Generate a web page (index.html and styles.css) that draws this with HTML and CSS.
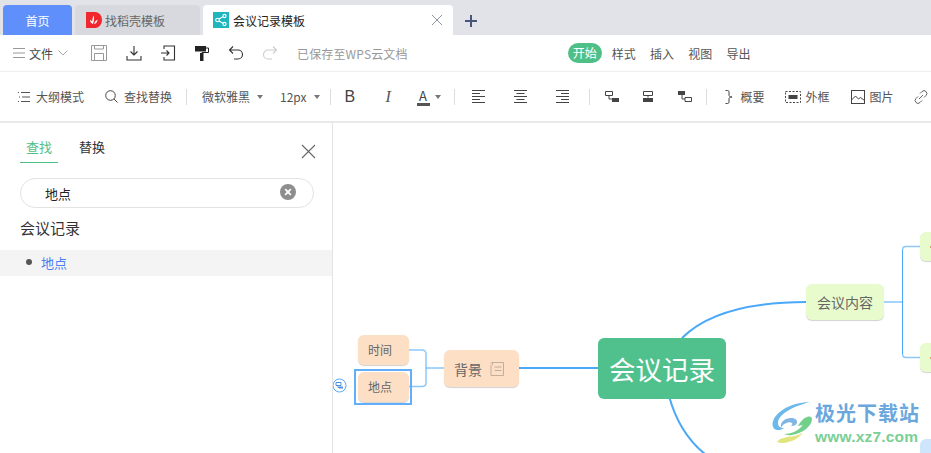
FILE: index.html
```html
<!DOCTYPE html>
<html lang="zh">
<head>
<meta charset="utf-8">
<title>会议记录模板</title>
<link rel="stylesheet" href="styles.css">
</head>
<body>
<div class="app">
  <div class="tabbar">
    <div class="tab tab-home">首页</div>
    <div class="tab tab-gray">
      <svg class="tab-icon" viewBox="0 0 16 16"><path d="M0 0h9a7 8 0 0 1 0 16H0z" fill="#f0282d"/><path d="M7.500 3.500c1 2 .6 5-.5 8.500-2-.5-3.200-2.500-2.800-4.500.8 1 1.500 1.500 2 1.700.3-2 .5-4 1.300-5.700zM8.200 12c.2-1.800 1.300-3.300 3.300-4.200-.1 2.200-1.300 3.800-3.300 4.200z" fill="#fff"/></svg>
      <span>找稻壳模板</span>
    </div>
    <div class="tab tab-active">
      <svg class="tab-icon" viewBox="0 0 16 16"><rect width="16" height="16" fill="#1fb5bd"/><g fill="none" stroke="#fff" stroke-width="1.100"><circle cx="4.500" cy="8" r="1.800"/><circle cx="11.500" cy="4" r="1.600"/><circle cx="11.500" cy="12" r="1.600"/><path d="M6 7l4-2.200M6 9l4 2.200"/></g></svg>
      <span class="tab-label">会议记录模板</span>
      <svg class="tab-close" viewBox="0 0 12 12"><path d="M1 1l10 10M11 1L1 11" stroke="#8d93a0" stroke-width="1" fill="none"/></svg>
    </div>
    <svg class="tab-add" viewBox="0 0 14 14"><path d="M7 1v12M1 7h12" stroke="#47567a" stroke-width="2" fill="none"/></svg>
  </div>

  <div class="menubar">
    <svg class="ico12" viewBox="0 0 12 12"><path d="M0 1.500h12M0 6h12M0 10.500h12" stroke="#999" stroke-width="1" fill="none"/></svg>
    <span class="menu-file">文件</span>
    <svg class="chev" viewBox="0 0 10 6"><path d="M.5.500L5 5 9.500.500" stroke="#aaa" fill="none"/></svg>
    <svg class="ico16 m-first" viewBox="0 0 16 16"><path d="M.5.500h15v15H.5zM3.500 15.500v-7h9v7M3.500.500v3.500h9V.500" stroke="#999" fill="none"/></svg>
    <svg class="ico16 m-dl" viewBox="0 0 16 16"><path d="M8 1v9M4.500 6.500L8 10l3.500-3.500M1 11v4h14v-4" stroke="#333" stroke-width="1.100" fill="none"/></svg>
    <svg class="ico16" viewBox="0 0 16 16"><path d="M4 4V1h10.500v14H4v-3M1 8h8M6.500 5.500L9 8l-2.500 2.500" stroke="#333" stroke-width="1.100" fill="none"/></svg>
    <svg class="ico16" viewBox="0 0 16 16"><rect x="1" y="1" width="11" height="5.500" fill="#222"/><path d="M12 3h2.500v4.500H8V9" stroke="#222" fill="none"/><rect x="6" y="8" width="3.500" height="8" fill="#222"/></svg>
    <svg class="ico16" viewBox="0 0 16 16"><path d="M5 1.500L1.500 5 5 8.500M1.500 5H10a4.500 4.500 0 0 1 0 9H6" stroke="#333" stroke-width="1.100" fill="none"/></svg>
    <svg class="ico16" viewBox="0 0 16 16"><path d="M11 1.500L14.500 5 11 8.500M14.500 5H6a4.500 4.500 0 0 0 0 9h4" stroke="#ccc" stroke-width="1.100" fill="none"/></svg>
    <span class="saved">已保存至WPS云文档</span>
    <div class="menu-tabs">
      <span class="pill">开始</span>
      <span>样式</span>
      <span>插入</span>
      <span>视图</span>
      <span>导出</span>
    </div>
  </div>

  <div class="toolbar">
    <svg class="ico12 t-first" viewBox="0 0 12 12"><path d="M0 1.500h1M3 1.500h9M1 6h1M4 6h8M0 10.500h1M3 10.500h9" stroke="#555" fill="none"/></svg>
    <span class="t-label t-outline">大纲模式</span>
    <svg class="ico13 t-search" viewBox="0 0 13 13"><circle cx="5.500" cy="5.500" r="4.800" stroke="#444" fill="none"/><path d="M9 9l3.500 3.500" stroke="#444" fill="none"/></svg>
    <span class="t-label">查找替换</span>
    <i class="sep s1"></i>
    <span class="t-label t-font">微软雅黑</span><i class="caret"></i>
    <span class="t-label t-size">12px</span><i class="caret"></i>
    <i class="sep s2"></i>
    <span class="t-b">B</span>
    <span class="t-i">I</span>
    <span class="t-a">A</span><i class="caret c-a"></i>
    <i class="sep s3"></i>
    <svg class="ico13 t-al1" viewBox="0 0 13 13"><path d="M0 .500h13M0 3.500h8M0 6.500h13M0 9.500h8M0 12.500h13" stroke="#444" fill="none"/></svg>
    <svg class="ico13 t-al" viewBox="0 0 13 13"><path d="M0 .500h13M2.500 3.500h8M0 6.500h13M2.500 9.500h8M0 12.500h13" stroke="#444" fill="none"/></svg>
    <svg class="ico13 t-al" viewBox="0 0 13 13"><path d="M0 .500h13M5 3.500h8M0 6.500h13M5 9.500h8M0 12.500h13" stroke="#444" fill="none"/></svg>
    <i class="sep s4"></i>
    <svg class="ico14 t-n1" viewBox="0 0 14 14"><path d="M.5 1.500h7v4h-7zM4 5.500v3.500h3" stroke="#444" fill="none"/><rect x="7" y="8" width="7" height="4" fill="#444"/></svg>
    <svg class="ico14 t-n" viewBox="0 0 14 14"><path d="M2.500 1.500h9v4h-9zM7 5.500v2" stroke="#444" fill="none"/><rect x="2" y="8" width="10" height="4" fill="#444"/></svg>
    <svg class="ico14 t-n3" viewBox="0 0 14 14"><rect x="0" y="1" width="7" height="4" fill="#444"/><path d="M4 5v4h3M7 7.500h6.500v4H7z" stroke="#444" fill="none"/></svg>
    <i class="sep s5"></i>
    <svg class="brace" viewBox="0 0 8 14"><path d="M.5.500h2c1 0 1.500.5 1.500 1.500v3c0 1 .5 2 3 2-2.500 0-3 1-3 2v3c0 1-.5 1.500-1.500 1.500h-2" stroke="#444" fill="none"/></svg>
    <span class="t-label t-sum">概要</span>
    <svg class="frame" viewBox="0 0 16 12"><rect x=".5" y=".5" width="15" height="11" stroke="#444" stroke-dasharray="2 1.500" fill="none"/><rect x="3.500" y="4" width="9" height="4" fill="#444"/></svg>
    <span class="t-label t-frame">外框</span>
    <svg class="ico14 t-img" viewBox="0 0 14 14"><rect x=".5" y=".5" width="13" height="13" stroke="#444" fill="none"/><path d="M.5 10L4.500 6l3 3 2-1.500 4 3" stroke="#444" fill="none"/></svg>
    <span class="t-label t-pic">图片</span>
    <svg class="ico14 t-link" viewBox="0 0 14 14"><path d="M6 3.500l2-2a2.800 2.800 0 0 1 4 4l-2 2M8 10.500l-2 2a2.800 2.800 0 0 1-4-4l2-2M5 9l4-4" stroke="#666" fill="none"/></svg>
  </div>

  <div class="main">
    <aside class="side">
      <div class="side-tabs">
        <span class="side-tab on">查找</span>
        <span class="side-tab">替换</span>
        <svg class="side-close" viewBox="0 0 15 15"><path d="M1 1l13 13M14 1L1 14" stroke="#666" stroke-width="1.100" fill="none"/></svg>
      </div>
      <div class="search">
        <span>地点</span>
        <svg class="clear" viewBox="0 0 16 16"><circle cx="8" cy="8" r="8" fill="#8e8e8e"/><path d="M5.200 5.200l5.600 5.600M10.800 5.200l-5.600 5.600" stroke="#fff" stroke-width="1.800"/></svg>
      </div>
      <div class="doc-title">会议记录</div>
      <div class="hit"><i class="dot"></i><span>地点</span></div>
    </aside>

    <div class="canvas">
      <svg class="lines" viewBox="0 0 598 330">
        <g fill="none" stroke="#4aa8f8">
          <path d="M185 245H265" stroke-width="2"/>
          <path d="M75 227h14q4 0 4 4v28.500q0 4-4 4H75" stroke="#8ec8fb" stroke-width="1.500"/>
          <path d="M93 245h18" stroke-width="1"/>
          <path d="M349 215C372 192 412 179 474 179" stroke-width="2"/>
          <path d="M551 179h18.500" stroke-width="1"/>
          <path d="M569.500 127v104" stroke-width="1"/>
          <path d="M587 123.500h-14q-3.500 0-3.500 3.500M587 234.500h-14q-3.500 0-3.500-3.500" stroke="#8ec8fb" stroke-width="1.500"/>
          <path d="M336 273C342 295 352 315 372 331" stroke-width="2"/>
        </g>
      </svg>
      <div class="node peach n-time">时间</div>
      <div class="node peach n-place">地点</div>
      <div class="selected"></div>
      <svg class="add-ico" viewBox="0 0 15 15"><circle cx="7.500" cy="7.500" r="6.500" stroke="#5aa9fa" fill="#fff"/><path d="M4 4.500h5v3H4zM6 7.500v2h1.500" stroke="#4a8ee0" fill="none"/><rect x="7" y="8.500" width="4" height="2" fill="#4a8ee0"/></svg>
      <div class="node peach n-bg">背景<svg class="note" viewBox="0 0 14 14"><path d="M2 .5h11.500v13H1V3M.5 1h2v2M4.500 5h7M4.500 8.500h7" stroke="#c4ad9c" fill="none"/></svg></div>
      <div class="node root">会议记录</div>
      <div class="node green n-content">会议内容</div>
      <div class="node green n-sub1"></div>
      <div class="node green n-sub2"></div>
      <div class="node blue n-sub3"></div>
      <div class="watermark">
        <svg class="wm-logo" viewBox="0 0 52 46">
          <path d="M42 2C30 2 14 7 7 17 3 23 4 29 9 30c3 .5 6-1 7-2-3 0-6-1-6-5C10 14 26 6 42 2z" fill="#6bb8ea"/>
          <path d="M13 27c-1-5 4-9 10-9 4 0 6 2 6 4 0 3-3 4-6 4 1-1 2-2 1-3-2-2-7 0-9 2-1 1-1 2-2 2z" fill="#7fb6e4"/>
          <path d="M30 26c2-3 4-7 9-9 3-1 5 0 5 2 0 7-9 14-20 16-3 .5-6 0-8-1 7 0 14-3 18-8 1-1 0-1-4 0z" fill="#72d08a"/>
          <path d="M9 42c2-4 10-5 17-6 4-1 7-2 9-3-5 6-12 9-19 10-3 0-5 0-7-1z" fill="#e2e57e"/>
        </svg>
        <div class="wm-text">
          <div class="wm-cn">极光下载站</div>
          <div class="wm-en">www.xz7.com</div>
        </div>
      </div>
    </div>
  </div>
</div>
</body>
</html>
```
FILE: styles.css
```css
* { box-sizing: border-box; }
html, body { margin: 0; padding: 0; }
body {
  width: 931px;
  height: 453px;
  overflow: hidden;
  background: #fff;
  font-family: "Noto Sans CJK SC", "Liberation Sans", sans-serif;
  font-size: 12px;
  color: #444;
}
i { display: block; font-style: normal; flex: none; }
svg { display: block; flex: none; }
.app { width: 931px; height: 453px; display: flex; flex-direction: column; overflow: hidden; }

.tabbar { height: 35px; flex: none; display: flex; align-items: flex-end; padding-left: 3px; background: #e1e3e8; }
.tab { height: 30px; display: flex; align-items: center; border-radius: 4px 4px 0 0; font-size: 12px; }
.tab-home { width: 69px; justify-content: center; background: #5f8ffb; color: #fff; }
.tab-gray { width: 125px; margin-left: 3px; padding-left: 11px; background: #d8d9de; color: #666; }
.tab-active { width: 250px; margin-left: 3px; padding-left: 10px; background: #fff; color: #222; }
.tab-icon { width: 16px; height: 16px; }
.tab-gray span { margin-left: 3px; }
.tab-label { margin-left: 4px; flex: 1; }
.tab-close { width: 12px; height: 12px; margin-right: 10px; }
.tab-add { width: 14px; height: 14px; margin: 0 0 7px 11px; }

.menubar { height: 37px; flex: none; display: flex; align-items: center; padding-left: 13px; border-bottom: 1px solid #eee; }
.ico12 { width: 12px; height: 12px; }
.ico13 { width: 13px; height: 13px; }
.ico14 { width: 14px; height: 14px; }
.ico16 { width: 16px; height: 16px; margin-left: 18px; }
.menu-file { margin-left: 4px; color: #444; }
.chev { width: 10px; height: 6px; margin-left: 5px; }
.ico16.m-first { margin-left: 23px; }
.ico16.m-dl { margin-left: 19px; }
.saved { margin-left: 19px; color: #999; letter-spacing: .15px; }
.menu-tabs { display: flex; align-items: center; gap: 14.3px; margin-left: 160px; color: #555; }
.pill { width: 34px; height: 20px; line-height: 20px; text-align: center; border-radius: 10px; background: #4fbf88; color: #fff; margin-right: -4.3px; }

.toolbar { height: 51px; flex: none; display: flex; align-items: center; padding-left: 18px; border-bottom: 2px solid #e9e9e9; white-space: nowrap; overflow: hidden; }
.t-label { color: #555; }
.t-outline { margin-left: 6px; }
.t-search { margin-left: 21px; margin-right: 6px; }
.sep { width: 1px; height: 16px; background: #ddd; }
.s1 { margin: 0 15px 0 14px; }
.caret { width: 0; height: 0; margin-left: 7px; border: 3px solid transparent; border-top: 4px solid #777; border-bottom: 0; }
.t-size { margin-left: 17px; }
.s2 { margin-left: 10px; }
.t-b { margin-left: 14px; width: 11px; font: 16px "Liberation Sans", sans-serif; color: #444; }
.t-i { margin-left: 30px; width: 5px; font: italic 16px "Liberation Serif", serif; color: #555; }
.t-a { margin-left: 26px; width: 13px; font-size: 13px; line-height: 15px; height: 18px; color: #444; text-align: center; border-bottom: 3px solid #555; }
.c-a { margin-left: 5px; }
.s3 { margin-left: 13px; }
.t-al1 { margin-left: 17px; }
.t-al { margin-left: 29px; }
.s4 { margin-left: 20px; }
.t-n1 { margin-left: 15px; }
.t-n { margin-left: 22px; }
.t-n3 { margin-left: 23px; }
.s5 { margin-left: 14px; }
.brace { width: 8px; height: 14px; margin-left: 18px; }
.t-sum { margin-left: 8px; }
.frame { width: 16px; height: 12px; margin-left: 20px; }
.t-frame { margin-left: 5px; }
.t-img { margin-left: 21px; }
.t-pic { margin-left: 5px; }
.t-link { margin-left: 20px; }

.main { flex: 1; min-height: 0; display: flex; }
.side { width: 333px; flex: none; border-right: 1px solid #e4e4e4; }
.side-tabs { height: 41px; position: relative; display: flex; align-items: flex-start; padding: 14px 0 0 20px; }
.side-tab { width: 38px; height: 26px; margin-right: 15px; text-align: center; font-size: 13px; line-height: 20px; color: #333; }
.side-tab.on { color: #4fbf88; border-bottom: 1px solid #4fbf88; }
.side-close { width: 15px; height: 15px; position: absolute; left: 301px; top: 21px; }
.search { width: 294px; height: 30px; margin: 14px 0 0 20px; padding: 0 17px 0 24px; display: flex; align-items: center; justify-content: space-between; border: 1px solid #e3e3e3; border-radius: 15px; color: #222; font-size: 13px; }
.clear { width: 16px; height: 16px; margin-top: -2px; }
.doc-title { margin: 9px 0 0 20px; height: 23px; line-height: 22px; font-size: 15px; color: #333; }
.hit { height: 26px; margin-top: 10px; padding-left: 26px; padding-bottom: 2px; display: flex; align-items: center; background: #f4f4f4; color: #4a7ef6; font-size: 13px; }
.dot { width: 6px; height: 6px; border-radius: 50%; background: #555; margin-right: 9px; }

.canvas { flex: 1; position: relative; overflow: hidden; background: #fff; }
.lines { position: absolute; left: 0; top: 0; width: 598px; height: 330px; }
.node { position: absolute; display: flex; align-items: center; justify-content: center; border-radius: 6px; box-shadow: 0 1px 1px rgba(0,0,0,.18); color: #666; }
.peach { background: #fddfc6; }
.green { background: #e8fbcd; }
.blue { background: #cfe5fb; }
.n-time { left: 25px; top: 212px; width: 51px; height: 30px; padding: 0 7px 2px 0; }
.n-place { left: 25px; top: 249px; width: 51px; height: 30px; padding: 0 7px 2px 0; }
.selected { position: absolute; left: 21px; top: 246px; width: 58px; height: 36px; border: 2px solid #62aef8; }
.add-ico { position: absolute; left: -1px; top: 255px; width: 15px; height: 15px; }
.n-bg { left: 111px; top: 227px; width: 75px; height: 37px; font-size: 14px; padding-right: 5px; }
.note { width: 14px; height: 14px; margin-left: 8px; }
.root { left: 265px; top: 215px; width: 128px; height: 61px; background: #50c18d; color: #fff; font-size: 26.5px; box-shadow: none; white-space: nowrap; }
.n-content { left: 473px; top: 161px; width: 78px; height: 36px; font-size: 14px; }
.n-sub1 { left: 587px; top: 109px; width: 20px; height: 29px; }
.n-sub2 { left: 587px; top: 220px; width: 20px; height: 29px; }
.n-sub1::after, .n-sub2::after { content: ""; position: absolute; left: 10px; top: 14px; width: 1px; height: 2px; background: #d8a468; }
.n-sub3 { left: 587px; top: 316px; width: 20px; height: 30px; box-shadow: none; }
.watermark { position: absolute; left: 435px; top: 277px; display: flex; align-items: flex-start; }
.wm-logo { width: 52px; height: 46px; }
.wm-text { margin: 1px 0 0 -5px; }
.wm-cn { font-size: 20px; line-height: 24px; letter-spacing: 1px; font-weight: 700; color: #6aa7dc; white-space: nowrap; }
.wm-en { margin-top: 2px; font: 700 15.500px/20px "Liberation Sans", sans-serif; color: #79cf94; letter-spacing: .2px; }
```
